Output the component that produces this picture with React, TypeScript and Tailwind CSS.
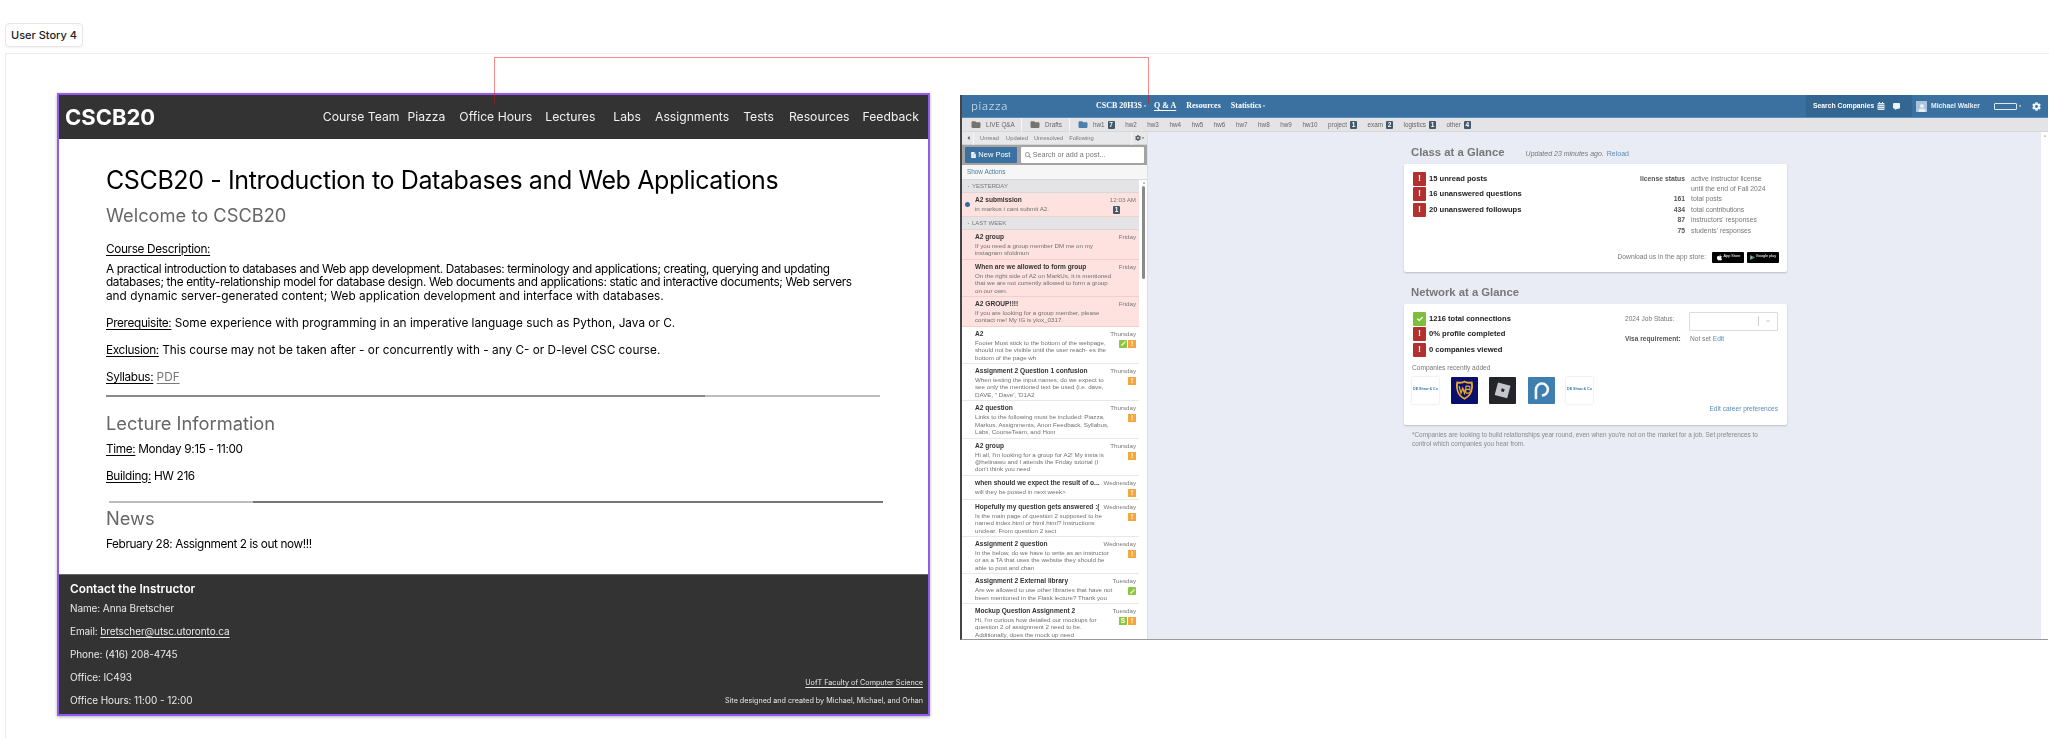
import React from "react";
import { FaFolder, FaCog, FaApple, FaGooglePlay, FaCheck, FaFileAlt, FaCommentAlt, FaCalendarAlt, FaSearch, FaUser, FaChevronDown, FaCaretDown, FaCaretLeft, FaPencilAlt } from "react-icons/fa";

const navItems = [
  { t: "Course Team", c: "ml-0" },
  { t: "Piazza", c: "ml-[8px]" },
  { t: "Office Hours", c: "ml-[14px]" },
  { t: "Lectures", c: "ml-[13px]" },
  { t: "Labs", c: "ml-[18px]" },
  { t: "Assignments", c: "ml-[14px]" },
  { t: "Tests", c: "ml-[14px]" },
  { t: "Resources", c: "ml-[15px]" },
  { t: "Feedback", c: "ml-[13px]" },
];

function Term({ children }: { children: React.ReactNode }) {
  return <span className="underline underline-offset-2 tracking-[-0.35px]">{children}</span>;
}

function CourseSite() {
  return (
    <div className="w-[873px] h-[623px] shrink-0 border-2 border-[#9558f0] flex flex-col shadow-[0_1px_3px_rgba(0,0,0,0.3)] font-['Inter',sans-serif] blur-[0.3px]">
      <div className="h-[44px] shrink-0 bg-[#333333] flex items-center justify-between pl-[6px] pr-[9px] text-white">
        <div className="text-[22px] leading-[30px] font-bold">CSCB20</div>
        <div className="flex text-[12.2px] leading-[20px] text-[#f0f0f0]">
          {navItems.map((n) => (
            <span key={n.t} className={n.c}>{n.t}</span>
          ))}
        </div>
      </div>
      <div className="flex-1 bg-white px-[47px] text-black text-[11.8px] leading-[14px]">
        <h1 className="mt-[23px] text-[25px] leading-[36px] font-normal tracking-[-0.39px]">CSCB20 - Introduction to Databases and Web Applications</h1>
        <h2 className="mt-[4.5px] text-[18.3px] leading-[24px] text-[#666666]">Welcome to CSCB20</h2>
        <p className="mt-[15px]"><Term>Course Description:</Term></p>
        <p className="mt-[7px] leading-[13.5px] whitespace-nowrap">
          <span className="block tracking-[-0.385px]">A practical introduction to databases and Web app development. Databases: terminology and applications; creating, querying and updating</span>
          <span className="block tracking-[-0.36px]">databases; the entity-relationship model for database design. Web documents and applications: static and interactive documents; Web servers</span>
          <span className="block">and dynamic server-generated content; Web application development and interface with databases.</span>
        </p>
        <p className="mt-[13px]"><Term>Prerequisite:</Term> Some experience with programming in an imperative language such as Python, Java or C.</p>
        <p className="mt-[13px]"><Term>Exclusion:</Term> This course may not be taken after - or concurrently with - any C- or D-level CSC course.</p>
        <p className="mt-[13px]"><Term>Syllabus:</Term> <span className="text-[#777777] underline underline-offset-2">PDF</span></p>
        <div className="mt-[11px] h-[2px] w-[774px] flex">
          <div className="w-[599px] bg-[#8a8a8a]" />
          <div className="flex-1 bg-[#bdbdbd]" />
        </div>
        <h2 className="mt-[14px] text-[18.3px] leading-[24px] text-[#666666]">Lecture Information</h2>
        <p className="mt-[7px] tracking-[-0.35px]"><Term>Time:</Term> Monday 9:15 - 11:00</p>
        <p className="mt-[12.5px] tracking-[-0.35px]"><Term>Building:</Term> HW 216</p>
        <div className="mt-[18.5px] ml-[3px] h-[2px] w-[774px] flex">
          <div className="w-[144px] bg-[#bdbdbd]" />
          <div className="flex-1 bg-[#777777]" />
        </div>
        <h2 className="mt-[3px] text-[18.3px] leading-[24px] text-[#666666]">News</h2>
        <p className="mt-[7px] tracking-[-0.4px]">February 28: Assignment 2 is out now!!!</p>
      </div>
      <div className="h-[140px] shrink-0 bg-[#333333] border-t border-[#666666] flex justify-between items-end pl-[11px] pr-[5px] pb-[7px] text-[#e8e8e8] text-[10px] leading-[14px] tracking-[-0.1px]">
        <div>
          <div className="text-[11.8px] font-semibold text-white tracking-normal">Contact the Instructor</div>
          <div className="mt-[5px]">Name: Anna Bretscher</div>
          <div className="mt-[9px]">Email: <span className="underline underline-offset-2">bretscher@utsc.utoronto.ca</span></div>
          <div className="mt-[9px]">Phone: (416) 208-4745</div>
          <div className="mt-[9px]">Office: IC493</div>
          <div className="mt-[9px]">Office Hours: 11:00 - 12:00</div>
        </div>
        <div className="text-right text-[7.2px] leading-[10px] tracking-normal">
          <div className="underline underline-offset-2">UofT Faculty of Computer Science</div>
          <div className="mt-[8px] mb-[1px]">Site designed and created by Michael, Michael, and Orhan</div>
        </div>
      </div>
    </div>
  );
}

const tabs = [
  { t: "hw1", b: "7" }, { t: "hw2" }, { t: "hw3" }, { t: "hw4" }, { t: "hw5" }, { t: "hw6" }, { t: "hw7" }, { t: "hw8" }, { t: "hw9" }, { t: "hw10" },
  { t: "project", b: "1" }, { t: "exam", b: "2" }, { t: "logistics", b: "1" }, { t: "other", b: "4" },
];

function Count({ n }: { n: string }) {
  return <span className="w-[7px] h-[8px] bg-[#44586a] text-white text-[6.5px] leading-[8px] font-bold text-center rounded-[1px]">{n}</span>;
}

function Header() {
  return (
    <div className="h-[23px] shrink-0 bg-[#3a71a1] border-b border-[#5c8db6] flex items-center text-white">
      <span className="ml-[9px] w-[37px] text-[12.5px] leading-[14px] tracking-[0.7px] font-['Lato',sans-serif] font-light text-[#e8f0f6]">piazza</span>
      <div className="ml-[88px] flex items-center font-['Liberation_Serif',serif] font-bold text-[8px] leading-[10px]">
        <span>CSCB 20H3S</span>
        <FaCaretDown className="w-[4px] h-[4px] ml-[1px]" />
        <span className="ml-[7px] underline underline-offset-2">Q &amp; A</span>
        <span className="ml-[10px]">Resources</span>
        <span className="ml-[10px]">Statistics</span>
        <FaCaretDown className="w-[4px] h-[4px] ml-[1px]" />
      </div>
      <div className="ml-auto h-full flex items-center">
        <div className="h-full w-[106px] bg-[#336690] flex items-center pl-[7px] text-[6.8px] font-bold font-['Liberation_Sans',sans-serif]">
          <span className="w-[62px] whitespace-nowrap">Search Companies</span>
          <FaCalendarAlt className="w-[8px] h-[8px] ml-[2px] text-[#dfe8ef]" />
          <FaCommentAlt className="w-[7px] h-[7px] ml-[8px] text-[#eef3f7]" />
        </div>
        <div className="ml-[4px] w-[11px] h-[11px] bg-[#a9c3dc] flex items-end justify-center"><FaUser className="w-[8px] h-[8px] text-[#e6eef5]" /></div>
        <span className="ml-[4px] w-[55px] whitespace-nowrap text-[6.8px] font-bold font-['Liberation_Sans',sans-serif] text-[#e8eff5]">Michael Walker</span>
        <div className="ml-[8px] w-[23px] h-[7px] border border-[#dfe8ef] rounded-[1px]" />
        <FaCaretDown className="w-[4px] h-[4px] ml-[1px]" />
        <FaCog className="w-[9px] h-[9px] ml-[10px] mr-[7px] text-[#f2f5f8]" />
      </div>
    </div>
  );
}

function TabBar() {
  return (
    <div className="h-[14px] shrink-0 bg-[#e4e4e6] flex items-center text-[6.3px] leading-[8px] text-[#666666] whitespace-nowrap border-b border-[#d8d8da]">
      <FaFolder className="ml-[9px] w-[10px] h-[9px] text-[#77726c]" />
      <span className="ml-[5px] w-[35px]">LIVE Q&amp;A</span>
      <span className="w-px h-[14px] bg-[#f6f6f6]" />
      <FaFolder className="ml-[8px] w-[10px] h-[9px] text-[#77726c]" />
      <span className="ml-[5px] w-[24px]">Drafts</span>
      <span className="w-px h-[14px] bg-[#f6f6f6]" />
      <FaFolder className="ml-[8px] w-[10px] h-[9px] text-[#4b80ae]" />
      <div className="ml-[5px] flex items-center gap-[10.6px]">
        {tabs.map((t) => (
          <span key={t.t} className="flex items-center gap-[3px]">
            {t.t}
            {t.b && <Count n={t.b} />}
          </span>
        ))}
      </div>
    </div>
  );
}

type Post = { title: string; time: string; lines: string[]; unread?: boolean; pink?: boolean; badges?: string[]; dark?: boolean };

const posts: Post[] = [
  { title: "A2 group", time: "Friday", pink: true, lines: ["If you need a group member DM me on my", "instagram sfoldmun"] },
  { title: "When are we allowed to form group", time: "Friday", pink: true, lines: ["On the right side of A2 on MarkUs, it is mentioned", "that we are not currently allowed to form a group", "on our own."] },
  { title: "A2 GROUP!!!!", time: "Friday", pink: true, lines: ["If you are looking for a group member, please", "contact me! My IG is ylox_0317."] },
  { title: "A2", time: "Thursday", badges: ["g", "i"], lines: ["Footer Must stick to the bottom of the webpage,", "should not be visible until the user reach- es the", "bottom of the page wh"] },
  { title: "Assignment 2 Question 1 confusion", time: "Thursday", badges: ["i"], lines: ["When testing the input names, do we expect to", "see only the mentioned text be used (i.e. dave,", "DAVE, \"  Dave', 'D1A2"] },
  { title: "A2 question", time: "Thursday", badges: ["i"], lines: ["Links to the following must be included: Piazza,", "Markus, Assignments, Anon Feedback, Syllabus,", "Labs, CourseTeam, and Hom"] },
  { title: "A2 group", time: "Thursday", badges: ["i"], lines: ["Hi all, I'm looking for a group for A2! My insta is", "@helinawu and I attends the Friday tutorial (I", "don't think you need"] },
  { title: "when should we expect the result of o...", time: "Wednesday", badges: ["i"], lines: ["will they be posted in next week>"] },
  { title: "Hopefully my question gets answered :(", time: "Wednesday", badges: ["i"], lines: ["Is the main page of question 2 supposed to be", "named index.html or html.html? Instructions", "unclear. From question 2 sect"] },
  { title: "Assignment 2 question", time: "Wednesday", badges: ["i"], lines: ["In the below, do we have to write as an instructor", "or as a TA that uses the website they should be", "able to post and chan"] },
  { title: "Assignment 2 External library", time: "Tuesday", badges: ["g"], lines: ["Are we allowed to use other libraries that have not", "been mentioned in the Flask lecture? Thank you"] },
  { title: "Mockup Question Assignment 2", time: "Tuesday", badges: ["s", "i"], lines: ["Hi, I'm curious how detailed our mockups for", "question 2 of assignment 2 need to be.", "Additionally, does the mock up need"] },
];

function PostBadge({ k }: { k: string }) {
  if (k === "i") return <span className="w-[8px] h-[8px] ml-px bg-[#f5a63c] text-white text-[6.5px] leading-[8px] font-bold text-center">!</span>;
  if (k === "s") return <span className="w-[8px] h-[8px] bg-[#8cc443] text-white text-[6.5px] leading-[8px] font-bold text-center">S</span>;
  return (
    <span className="w-[8px] h-[8px] bg-[#8cc443] flex items-center justify-center rounded-[1px]">
      <FaPencilAlt className="w-[5px] h-[5px] text-[#f5f0c0]" />
    </span>
  );
}

function PostRow({ p }: { p: Post }) {
  return (
    <div className={`relative min-h-[24px] pl-[13px] pr-[3px] pt-[3px] pb-[2px] flex justify-between border-b ${p.pink ? "bg-[#fde2df] border-[#f3cfcc]" : "bg-white border-[#e8e8e8]"}`}>
      {p.unread && <span className="absolute left-[3px] top-[9px] w-[5px] h-[5px] rounded-full bg-[#2e6da4]" />}
      <div className="min-w-0">
        <div className="text-[6.6px] leading-[8px] font-bold text-[#333333] whitespace-nowrap">{p.title}</div>
        <div className="mt-[1px] text-[6.2px] leading-[7.4px] text-[#707070] whitespace-nowrap">
          {p.lines.map((l) => <div key={l}>{l}</div>)}
        </div>
      </div>
      <div className="flex flex-col items-end shrink-0">
        <span className="text-[6.2px] leading-[8px] text-[#777777]">{p.time}</span>
        {p.badges && (
          <span className="mt-[2px] flex">
            {p.badges.map((b, i) => <PostBadge key={i} k={b} />)}
          </span>
        )}
        {p.dark && <span className="mt-[2px] mr-[16px] flex"><Count n="1" /></span>}
      </div>
    </div>
  );
}

function SectionHead({ t }: { t: string }) {
  return (
    <div className="h-[13px] bg-[#e4e4e6] border-b border-[#d8d8da] flex items-center pl-[5px] text-[6px] text-[#777777]">
      <FaCaretDown className="w-[3px] h-[3px] mr-[2px]" />
      {t}
    </div>
  );
}

function Sidebar() {
  return (
    <div className="w-[186px] shrink-0 flex flex-col bg-white border-r border-[#dcdfe6] overflow-hidden">
      <div className="h-[13px] shrink-0 bg-[#e8e8ea] flex items-center text-[5.8px] text-[#777777] border-b border-[#d5d5d7]">
        <FaCaretLeft className="ml-[4px] w-[5px] h-[6px] text-[#555555]" />
        <span className="ml-[2px] w-px h-[13px] bg-[#f6f6f6]" />
        <span className="ml-[6px]">Unread</span>
        <span className="ml-[7px]">Updated</span>
        <span className="ml-[6px]">Unresolved</span>
        <span className="ml-[6px]">Following</span>
        <span className="ml-auto w-px h-[13px] bg-[#f6f6f6]" />
        <FaCog className="ml-[3px] w-[6px] h-[6px] text-[#555555]" />
        <FaCaretDown className="w-[4px] h-[4px] mr-[2px] text-[#555555]" />
      </div>
      <div className="h-[20px] shrink-0 bg-[#a3a3a3] flex items-center px-[3px] gap-[4px]">
        <div className="w-[52px] h-[16px] bg-[#3a71a1] rounded-[1px] flex items-center justify-center text-white text-[7.5px]">
          <FaFileAlt className="w-[5px] h-[6px] mr-[2px]" />New Post
        </div>
        <div className="w-[124px] h-[16px] bg-white rounded-[1px] flex items-center pl-[4px] text-[7.2px] text-[#777777]">
          <FaSearch className="w-[6px] h-[6px] mr-[2px] text-[#9a9a9a]" />Search or add a post...
        </div>
      </div>
      <div className="h-[15px] shrink-0 bg-[#f6f6f6] flex items-center pl-[5px] text-[6.4px] text-[#4a7ba6] border-b border-[#d8d8da]">Show Actions</div>
      <div className="flex-1 flex min-h-0">
        <div className="w-[177px] shrink-0">
          <SectionHead t="YESTERDAY" />
          <PostRow p={{ title: "A2 submission", time: "12:03 AM", pink: true, unread: true, dark: true, lines: ["in markus i cant submit A2."] }} />
          <SectionHead t="LAST WEEK" />
          {posts.map((p, i) => <PostRow key={i} p={p} />)}
        </div>
        <div className="w-[9px] shrink-0 bg-white flex flex-col items-center">
          <FaCaretDown className="w-[4px] h-[4px] rotate-180 text-[#777777] mt-[1px]" />
          <div className="w-[3.5px] h-[93px] mt-[1px] bg-[#8a8a8a] rounded-[2px]" />
        </div>
      </div>
    </div>
  );
}

function Alert({ ok }: { ok?: boolean }) {
  return (
    <span className={`w-[13px] h-[14px] shrink-0 rounded-[1px] flex items-center justify-center text-white text-[9px] font-bold ${ok ? "bg-[#7fbe3a]" : "bg-[#b3302e]"}`}>
      {ok ? <FaCheck className="w-[6px] h-[6px]" /> : "!"}
    </span>
  );
}

function Stat({ ok, children }: { ok?: boolean; children: React.ReactNode }) {
  return (
    <div className="flex items-center h-[14px] gap-[3px] text-[7.6px] font-bold text-[#222222] whitespace-nowrap">
      <Alert ok={ok} />
      {children}
    </div>
  );
}

const classStats = [
  { a: "license status", b: "active instructor license" },
  { a: "", b: "until the end of Fall 2024" },
  { a: "161", b: "total posts" },
  { a: "434", b: "total contributions" },
  { a: "87", b: "instructors' responses" },
  { a: "75", b: "students' responses" },
];

function Shaw() {
  return (
    <div className="w-[27px] h-[27px] bg-white rounded-[1px] shadow-[0_0_2px_rgba(0,0,0,0.2)] flex items-center justify-center text-[3.6px] font-bold text-[#3a7ba8] whitespace-nowrap">
      DE Shaw &amp; Co
    </div>
  );
}

function Logos() {
  return (
    <div className="mt-[5px] flex gap-[11.5px]">
      <Shaw />
      <div className="w-[27px] h-[27px] bg-[#0a0f6e] rounded-[1px] flex items-center justify-center">
        <svg viewBox="0 0 24 24" className="w-[21px] h-[22px]">
          <path d="M12 1C9 3 6 3 3 2 1 9 3 19 12 23 21 19 23 9 21 2 18 3 15 3 12 1Z" fill="#e6a92c" />
          <path d="M12 3.500C9.500 5 6.500 5 4.800 4.500 3.500 10 5 17.500 12 20.800 19 17.500 20.500 10 19.200 4.500 17.500 5 14.500 5 12 3.500Z" fill="#0a0f6e" />
          <path d="M5.800 7.500 8 15.500 10 10 12 15.500 13 11" stroke="#e6a92c" strokeWidth="1.500" fill="none" />
          <path d="M13.500 7.500V15.500M13.500 7.500H16.500C19 7.500 19 11.300 16.500 11.300H13.500M16.500 11.300C19.500 11.300 19.500 15.500 16.500 15.500H13.500" stroke="#e6a92c" strokeWidth="1.300" fill="none" />
        </svg>
      </div>
      <div className="w-[27px] h-[27px] bg-[#23252b] rounded-[1px] flex items-center justify-center">
        <svg viewBox="0 0 24 24" className="w-[20px] h-[20px]">
          <path d="M6 3 21 7 17 22 2 18Z" fill="#c3c7cc" />
          <path d="M10.500 10 14 11 13 14.500 9.600 13.500Z" fill="#23252b" />
        </svg>
      </div>
      <div className="w-[27px] h-[27px] bg-[#3f7fb0] rounded-[1px] flex items-center justify-center">
        <svg viewBox="0 0 24 24" className="w-[22px] h-[22px]">
          <path d="M6.500 22V11.500A6.500 6.500 0 1 1 13 18" stroke="#f4f8fb" strokeWidth="2.800" fill="none" />
        </svg>
      </div>
      <Shaw />
    </div>
  );
}

function Main() {
  return (
    <div className="flex-1 min-w-0 bg-[#e9ecf4] flex font-['Liberation_Sans',sans-serif]">
      <div className="flex-1 min-w-0 pl-[256px]">
        <div className="mt-[13px] pl-[7px] flex items-baseline text-[#777777]">
          <span className="text-[11.3px] leading-[14px] font-bold">Class at a Glance</span>
          <span className="ml-[21px] text-[7px] italic text-[#777777]">Updated 23 minutes ago.</span>
          <span className="ml-[3px] text-[7px] text-[#5b8db6]">Reload</span>
        </div>
        <div className="mt-[4px] w-[383px] h-[108px] bg-white rounded-[2px] shadow-[0_1px_2px_rgba(0,0,0,0.2)] pl-[9px] pr-[8px] pt-[8px] flex justify-between relative">
          <div className="flex flex-col gap-[1.6px]">
            <Stat>15 unread posts</Stat>
            <Stat>16 unanswered questions</Stat>
            <Stat>20 unanswered followups</Stat>
          </div>
          <div className="w-[192px] mt-[2px] text-[6.8px] leading-[10.4px] text-[#777777]">
            {classStats.map((s) => (
              <div key={s.b} className="flex">
                <span className="w-[98px] pl-[2px] text-right font-bold text-[#555555] whitespace-nowrap">{s.a}</span>
                <span className="ml-[6px] whitespace-nowrap">{s.b}</span>
              </div>
            ))}
          </div>
          <div className="absolute right-[8px] bottom-[9px] flex items-center text-[6.7px] text-[#777777]">
            Download us in the app store:
            <span className="ml-[6px] w-[32px] h-[11px] bg-black rounded-[1px] flex items-center justify-center text-white text-[3.8px] whitespace-nowrap"><FaApple className="w-[7px] h-[7px] mr-[1px]" />App Store</span>
            <span className="ml-[3px] w-[32px] h-[11px] bg-black rounded-[1px] flex items-center justify-center text-white text-[3.8px] whitespace-nowrap"><FaGooglePlay className="w-[5px] h-[5px] mr-[1px] text-[#7fc1a0]" />Google play</span>
          </div>
        </div>
        <div className="mt-[13px] pl-[7px] text-[11.3px] leading-[14px] font-bold text-[#777777]">Network at a Glance</div>
        <div className="mt-[5px] w-[383px] h-[121px] bg-white rounded-[2px] shadow-[0_1px_2px_rgba(0,0,0,0.2)] pl-[8px] pr-[9px] pt-[8px] flex justify-between">
          <div>
            <div className="ml-[1px] flex flex-col gap-[1.6px]">
              <Stat ok>1216 total connections</Stat>
              <Stat>0% profile completed</Stat>
              <Stat>0 companies viewed</Stat>
            </div>
            <div className="mt-[7px] text-[6.6px] leading-[8px] text-[#777777]">Companies recently added</div>
            <Logos />
          </div>
          <div className="w-[153px] flex flex-col text-[6.6px] text-[#777777]">
            <div className="flex items-start">
              <span className="w-[64px] mt-[2px] whitespace-nowrap">2024 Job Status:</span>
              <span className="w-[89px] h-[19px] border border-[#dcdcdc] rounded-[1px] flex items-center justify-end">
                <span className="w-px h-[10px] bg-[#cccccc]" />
                <FaChevronDown className="w-[6px] h-[4px] mx-[6px] text-[#bbbbbb]" />
              </span>
            </div>
            <div className="mt-[3px] flex items-center">
              <span className="w-[65px] font-bold text-[#555555] whitespace-nowrap">Visa requirement:</span>
              <span className="whitespace-nowrap">Not set <span className="text-[#5b8db6]">Edit</span></span>
            </div>
            <div className="mt-[61px] text-right text-[#5b8db6] whitespace-nowrap">Edit career preferences</div>
          </div>
        </div>
        <div className="mt-[5px] ml-[8px] text-[6.4px] leading-[9.5px] text-[#8a8a8a] whitespace-nowrap">
          *Companies are looking to build relationships year round, even when you're not on the market for a job. Set preferences to<br />
          control which companies you hear from.
        </div>
      </div>
      <div className="w-[7px] shrink-0 bg-white flex justify-center">
        <FaCaretDown className="w-[4px] h-[4px] rotate-180 mt-[2px] text-[#999999]" />
      </div>
    </div>
  );
}

function PiazzaApp() {
  return (
    <div className="w-[1088px] h-[545px] shrink-0 mt-[2px] ml-[30px] flex flex-col border-l-2 border-[#444444] border-b border-b-[#999999] font-['Liberation_Sans',sans-serif] blur-[0.3px] overflow-hidden">
      <Header />
      <div className="flex-1 flex flex-col min-h-0 bg-[#e4e4e6]">
        <TabBar />
        <div className="flex-1 flex min-h-0">
          <Sidebar />
          <Main />
        </div>
      </div>
    </div>
  );
}

export default function App() {
  return (
    <div className="relative w-[2049px] h-[738px] overflow-hidden bg-white pt-[23px] pl-[5px]">
      <div className="w-[78px] h-[24px] border border-[#e6e6e6] rounded-[4px] flex items-center justify-center text-[11px] font-medium text-[#222222] font-['Inter',sans-serif] shadow-[0_1px_1px_rgba(0,0,0,0.05)]">User Story 4</div>
      <div className="mt-[6px] h-[700px] border-t border-l border-[#ececec] pl-[51px] pt-[39px] flex items-start">
        <CourseSite />
        <PiazzaApp />
      </div>
      <div className="absolute left-[494px] top-[57px] w-[655px] h-[47px] border-t border-l border-r border-[rgba(240,0,0,0.45)]" />
    </div>
  );
}
